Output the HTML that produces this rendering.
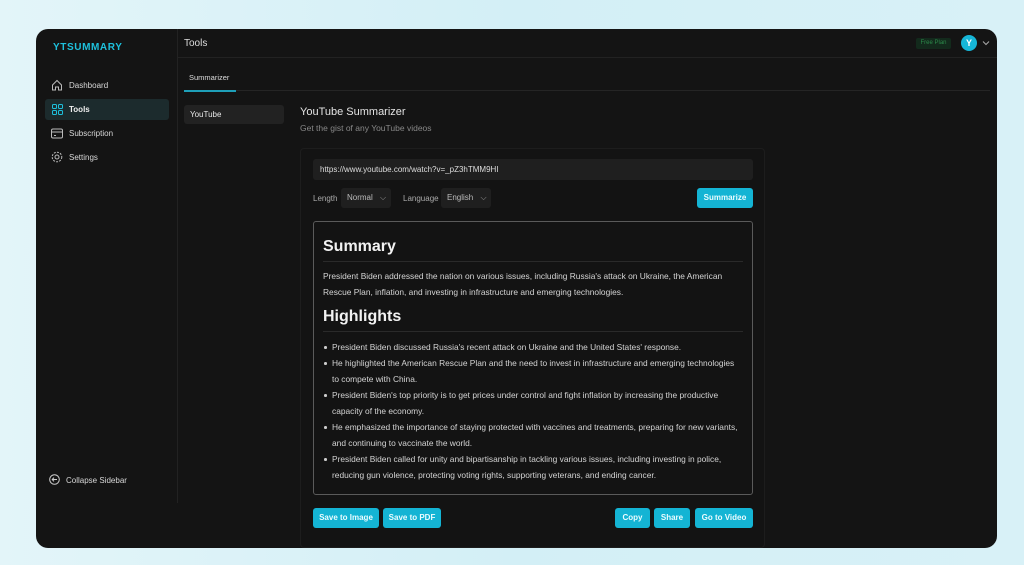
<!DOCTYPE html>
<html><head><meta charset="utf-8"><style>
*{margin:0;padding:0;box-sizing:border-box}
body{width:1024px;height:565px;overflow:hidden;background:linear-gradient(90deg,#e3f5f9,#d3eff6 50%,#d8f1f7);font-family:"Liberation Sans",sans-serif;position:relative}
.a{position:absolute}
#w{position:absolute;left:36px;top:29px;width:961px;height:519px;background:#141414;border-radius:12px;overflow:hidden}
.t{color:#d8d8d8;font-size:8px;white-space:nowrap}
.btn{position:absolute;background:#14b4d4;color:#eafcff;font-size:8px;border-radius:3px;text-align:center;line-height:20px;height:20px;font-weight:bold}
.sel{position:absolute;background:#1f1f1f;border-radius:3px;color:#bbb;font-size:8px;line-height:20px;height:20px;padding-left:6px}
ul{list-style:none}
li{position:relative;padding-left:9px;font-size:8.4px;line-height:16px;color:#d4d4d4}
li:before{content:"";position:absolute;left:1px;top:7px;width:2.5px;height:2.5px;background:#ccc;border-radius:50%}
</style></head><body>
<div id="w">
  <div class="a" style="left:17px;top:13px;color:#1ec0dc;font-weight:bold;font-size:10px;letter-spacing:.6px">YTSUMMARY</div>
  <div class="a" style="left:141px;top:0;width:1px;height:474px;background:#222"></div>
  <div class="a" style="left:142px;top:28px;width:819px;height:1px;background:#222"></div>
  <div class="a t" style="left:148px;top:9px;font-size:10px;color:#ddd">Tools</div>
  <div class="a" style="left:880px;top:9px;width:35px;height:11px;background:#132a1c;border-radius:2px;color:#2c8a4a;font-size:6px;line-height:11px;text-align:center">Free Plan</div>
  <div class="a" style="left:925px;top:6px;width:16px;height:16px;border-radius:50%;background:#16b6d8;color:#fff;font-size:9px;font-weight:bold;line-height:16px;text-align:center">Y</div>
  <svg class="a" style="left:946px;top:11px" width="8" height="6"><path d="M1 1.5L4 4.5L7 1.5" stroke="#aaa" fill="none"/></svg>
  <svg class="a" style="left:15px;top:50px" width="12" height="12" fill="none" stroke="#bbb" stroke-width="1"><path d="M1.5 6L6 1.5L10.5 6V11H7.5V8H4.5V11H1.5Z"/></svg>
  <div class="a t" style="left:33px;top:52px">Dashboard</div>
  <div class="a" style="left:9px;top:70px;width:124px;height:21px;background:#1c2b2d;border-radius:3px"></div>
  <svg class="a" style="left:16px;top:75px" width="11" height="11" fill="none" stroke="#1ec0dc" stroke-width="1"><rect x=".5" y=".5" width="4" height="4" rx="1"/><rect x="6.5" y=".5" width="4" height="4" rx="1"/><rect x=".5" y="6.5" width="4" height="4" rx="1"/><rect x="6.5" y="6.5" width="4" height="4" rx="1"/></svg>
  <div class="a t" style="left:33px;top:76px;color:#eee;font-weight:bold">Tools</div>
  <svg class="a" style="left:15px;top:99px" width="12" height="11" fill="none" stroke="#bbb"><rect x=".5" y="1" width="11" height="9" rx="1.5"/><path d="M.5 4H11.5M3 7.5H5"/></svg>
  <div class="a t" style="left:33px;top:100px">Subscription</div>
  <svg class="a" style="left:15px;top:122px" width="12" height="12" fill="none" stroke="#bbb"><circle cx="6" cy="6" r="2"/><circle cx="6" cy="6" r="4.8" stroke-dasharray="2 1.2"/></svg>
  <div class="a t" style="left:33px;top:124px">Settings</div>
  <svg class="a" style="left:13px;top:445px" width="11" height="11" fill="none" stroke="#ccc"><circle cx="5.5" cy="5.5" r="4.8"/><path d="M8 5.5H3.3M5 3.6L3.2 5.5L5 7.4"/></svg>
  <div class="a t" style="left:30px;top:447px">Collapse Sidebar</div>
  <div class="a t" style="left:153px;top:44px;font-size:7.5px;color:#ddd">Summarizer</div>
  <div class="a" style="left:148px;top:61px;width:806px;height:1px;background:#252525"></div>
  <div class="a" style="left:148px;top:61px;width:52px;height:2px;background:#1e9fb8"></div>
  <div class="a" style="left:148px;top:76px;width:100px;height:19px;background:#222;border-radius:3px"></div>
  <div class="a t" style="left:154px;top:81px;color:#e8e8e8">YouTube</div>
  <div class="a t" style="left:264px;top:77px;font-size:11px;color:#e4e4e4">YouTube Summarizer</div>
  <div class="a t" style="left:264px;top:94px;font-size:8.5px;color:#888">Get the gist of any YouTube videos</div>
  <div class="a" style="left:264px;top:119px;width:465px;height:400px;border:1px solid #1d1d1d;border-radius:4px;background:#131313"></div>
  <div class="a" style="left:277px;top:130px;width:440px;height:21px;background:#1f1f1f;border-radius:3px"></div>
  <div class="a t" style="left:284px;top:136px;color:#ddd">https://www.youtube.com/watch?v=_pZ3hTMM9HI</div>
  <div class="a t" style="left:277px;top:165px;color:#aaa">Length</div>
  <div class="sel" style="left:305px;top:159px;width:50px">Normal <span style="margin-left:5px;color:#999">⌵</span></div>
  <div class="a t" style="left:367px;top:165px;color:#aaa">Language</div>
  <div class="sel" style="left:405px;top:159px;width:50px">English <span style="margin-left:5px;color:#999">⌵</span></div>
  <div class="btn" style="left:661px;top:159px;width:56px">Summarize</div>
  <div class="a" style="left:277px;top:192px;width:440px;height:274px;border:1.5px solid #5a5a5a;border-radius:3px;background:#131313;padding:0 9px">
    <div style="font-size:16px;font-weight:bold;color:#f2f2f2;margin-top:16px;height:20px">Summary</div>
    <div style="border-top:1px solid #2a2a2a;margin-top:3px"></div>
    <div style="font-size:8.4px;line-height:16px;color:#d4d4d4;margin-top:6px">President Biden addressed the nation on various issues, including Russia's attack on Ukraine, the American Rescue Plan, inflation, and investing in infrastructure and emerging technologies.</div>
    <div style="font-size:16px;font-weight:bold;color:#f2f2f2;margin-top:8px;height:20px">Highlights</div>
    <div style="border-top:1px solid #2a2a2a;margin-top:3px;margin-bottom:7px"></div>
    <ul>
      <li>President Biden discussed Russia's recent attack on Ukraine and the United States' response.</li>
      <li>He highlighted the American Rescue Plan and the need to invest in infrastructure and emerging technologies to compete with China.</li>
      <li>President Biden's top priority is to get prices under control and fight inflation by increasing the productive capacity of the economy.</li>
      <li>He emphasized the importance of staying protected with vaccines and treatments, preparing for new variants, and continuing to vaccinate the world.</li>
      <li>President Biden called for unity and bipartisanship in tackling various issues, including investing in police, reducing gun violence, protecting voting rights, supporting veterans, and ending cancer.</li>
    </ul>
  </div>
  <div class="btn" style="left:277px;top:479px;width:66px">Save to Image</div>
  <div class="btn" style="left:347px;top:479px;width:58px">Save to PDF</div>
  <div class="btn" style="left:579px;top:479px;width:35px">Copy</div>
  <div class="btn" style="left:618px;top:479px;width:36px">Share</div>
  <div class="btn" style="left:659px;top:479px;width:58px">Go to Video</div>
</div>
</body></html>
